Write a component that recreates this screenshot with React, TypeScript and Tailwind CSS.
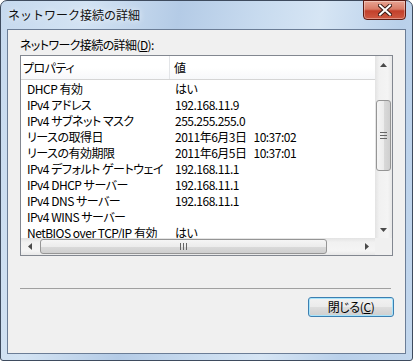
const rows: [string, string][] = [
  ["DHCP 有効", "はい"],
  ["IPv4 アドレス", "192.168.11.9"],
  ["IPv4 サブネット マスク", "255.255.255.0"],
  ["リースの取得日", "2011年6月3日|10:37:02"],
  ["リースの有効期限", "2011年6月5日|10:37:01"],
  ["IPv4 デフォルト ゲートウェイ", "192.168.11.1"],
  ["IPv4 DHCP サーバー", "192.168.11.1"],
  ["IPv4 DNS サーバー", "192.168.11.1"],
  ["IPv4 WINS サーバー", ""],
  ["NetBIOS over TCP/IP 有効", "はい"],
];

function Arrow({ dir }: { dir: "up" | "down" | "left" | "right" }) {
  const pts = {
    up: "0,4 3.5,0 7,4",
    down: "0,0 3.5,4 7,0",
    left: "4,0 0,3.5 4,7",
    right: "0,0 4,3.5 0,7",
  }[dir];
  const vertical = dir === "up" || dir === "down";
  return (
    <svg width={vertical ? 7 : 4} height={vertical ? 4 : 7} viewBox={vertical ? "0 0 7 4" : "0 0 4 7"}>
      <polygon points={pts} fill="#4a4a4a" />
    </svg>
  );
}

function CloseButton() {
  return (
    <div className="absolute top-[-1px] right-[6px] w-[43px] h-[20px] rounded-b-[4px] border border-[#5c1a12] bg-[linear-gradient(to_bottom,#e8a493_0%,#d97b66_45%,#c2402b_55%,#cf5a43_100%)] shadow-[inset_0_0_0_1px_rgba(255,255,255,0.35)] flex items-center justify-center">
      <svg width="14" height="12" viewBox="0 0 14 12">
        <path
          d="M2 1.5 L12 10.5 M12 1.5 L2 10.5"
          stroke="#3b1b16"
          strokeWidth="4"
          strokeLinecap="square"
        />
        <path
          d="M2 1.5 L12 10.5 M12 1.5 L2 10.5"
          stroke="#ffffff"
          strokeWidth="2"
          strokeLinecap="square"
        />
      </svg>
    </div>
  );
}

function VScrollBar() {
  return (
    <div className="w-[17px] h-full flex flex-col bg-[linear-gradient(to_right,#e3e3e3,#f1f1f1_25%,#f4f4f4_75%,#e8e8e8)]">
      <div className="h-[17px] flex items-center justify-center">
        <Arrow dir="up" />
      </div>
      <div className="flex-1 relative">
        <div className="absolute left-[1px] right-[1px] top-[27px] h-[71px] rounded-[3px] border border-[#959595] bg-[linear-gradient(to_right,#f5f5f5,#ececec_50%,#d9d9d9_55%,#cfcfcf)] flex flex-col items-center justify-center gap-[2px]">
          <div className="w-[7px] h-[1px] bg-[#666]" />
          <div className="w-[7px] h-[1px] bg-[#666]" />
          <div className="w-[7px] h-[1px] bg-[#666]" />
        </div>
      </div>
      <div className="h-[17px] flex items-center justify-center">
        <Arrow dir="down" />
      </div>
    </div>
  );
}

function HScrollBar() {
  return (
    <div className="h-[17px] w-full flex bg-[linear-gradient(to_bottom,#e3e3e3,#f1f1f1_25%,#f4f4f4_75%,#e8e8e8)]">
      <div className="w-[17px] flex items-center justify-center">
        <Arrow dir="left" />
      </div>
      <div className="flex-1 relative">
        <div className="absolute top-[1px] bottom-[1px] left-[2px] w-[287px] rounded-[3px] border border-[#959595] bg-[linear-gradient(to_bottom,#f5f5f5,#ececec_50%,#d9d9d9_55%,#cfcfcf)] flex items-center justify-center gap-[2px]">
          <div className="w-[1px] h-[7px] bg-[#666]" />
          <div className="w-[1px] h-[7px] bg-[#666]" />
          <div className="w-[1px] h-[7px] bg-[#666]" />
        </div>
      </div>
      <div className="w-[17px] flex items-center justify-center">
        <Arrow dir="right" />
      </div>
    </div>
  );
}

export default function App() {
  return (
    <div className="w-[413px] h-[361px] bg-white">
      <div className="relative w-[413px] h-[361px] flex flex-col border border-[#3e4b5e] rounded-t-[7px] rounded-b-[3px] px-[6px] pb-[6px] bg-[linear-gradient(100deg,#c6d9ee_0%,#d3e3f3_18%,#b4cbe6_38%,#c8dbef_55%,#d6e5f4_68%,#b9d0ea_85%,#c3d7ed_100%)] font-['Noto_Sans_CJK_JP',sans-serif] text-black">
        <div className="h-[28px] flex items-center pl-[1px]">
          <span className="text-[12px] leading-[14px] [text-shadow:0_0_6px_#ffffff] text-[#111]">
            ネットワーク接続の詳細
          </span>
        </div>
        <CloseButton />

        <div className="flex-1 border border-[#6b7d96] bg-[#f0f0f0] flex flex-col pl-[12px] pr-[12px] pt-[9px]">
          <div className="text-[12px] leading-[12px] h-[12px] [font-feature-settings:'palt'] tracking-[-0.6px] mb-[4px]">
            ネットワーク接続の詳細(<span className="underline">D</span>):
          </div>

          <div className="h-[201px] border border-[#828790] bg-white grid grid-cols-[1fr_17px] grid-rows-[1fr_17px]">
            <div className="overflow-hidden text-[12px] [font-feature-settings:'palt'] tracking-[-0.5px]">
              <div className="h-[24px] flex border-b border-[#d5d5d5] bg-[linear-gradient(to_bottom,#ffffff,#ffffff_50%,#f7f8fa)]">
                <div className="w-[149px] border-r border-[#e3e5e8] flex items-center pl-[2px]">
                  プロパティ
                </div>
                <div className="flex-1 flex items-center pl-[4px]">値</div>
              </div>
              <div className="pt-[1px]">
                {rows.map(([k, v]) => {
                  const [date, time] = v.split("|");
                  return (
                    <div key={k} className="h-[16px] flex items-center leading-[16px]">
                      <div className="w-[149px] pl-[6px] whitespace-nowrap overflow-hidden">{k}</div>
                      <div className="flex-1 pl-[5px] whitespace-nowrap">
                        {date}
                        {time && <span className="ml-[7px]">{time}</span>}
                      </div>
                    </div>
                  );
                })}
              </div>
            </div>
            <div>
              <VScrollBar />
            </div>
            <HScrollBar />
            <div className="bg-[#f0f0f0]" />
          </div>

          <div className="mt-[32px] h-[1px] bg-[#a0a0a0] mr-[2px]" />

          <div className="flex justify-end mt-[8px]">
            <button className="w-[86px] h-[20px] rounded-[3px] border border-[#3c7fb1] bg-[linear-gradient(to_bottom,#f2f2f2,#ebebeb_48%,#dddddd_52%,#cfcfcf)] shadow-[inset_0_0_0_1px_#a8e4fb] text-[12px] leading-[12px] [font-feature-settings:'palt'] tracking-[-0.4px] flex items-center justify-center -mr-[1px]">
              閉じる(<span className="underline">C</span>)
            </button>
          </div>
        </div>
      </div>
    </div>
  );
}
